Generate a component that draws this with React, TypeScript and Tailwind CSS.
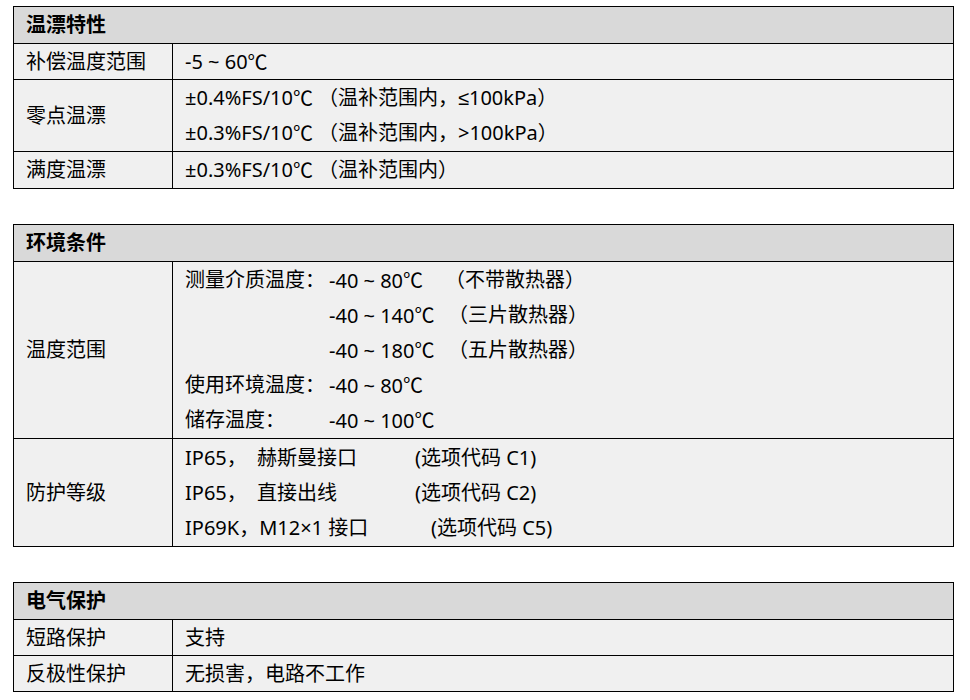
import React from "react";

const font = {
  fontFamily: '"Noto Sans", "Noto Sans CJK SC", sans-serif',
};

const cjk = { fontFamily: '"Noto Sans CJK SC", sans-serif' };
const sym = { fontFamily: '"Liberation Sans", sans-serif' };

function C() {
  return <span style={cjk}>℃</span>;
}

function Header({ title }: { title: string }) {
  return (
    <div className="h-[37px] bg-[#d9d9d9] border-b border-black flex items-center pl-3 font-bold text-[20px] leading-none">
      {title}
    </div>
  );
}

function Row({
  label,
  h,
  last,
  children,
}: {
  label: string;
  h: string;
  last?: boolean;
  children: React.ReactNode;
}) {
  return (
    <div className={`flex ${h} ${last ? "" : "border-b border-black"}`}>
      <div className="w-[159px] shrink-0 border-r border-black flex items-center pl-3">{label}</div>
      <div className="flex-1 pl-3 flex flex-col justify-center">{children}</div>
    </div>
  );
}

function Line({ children }: { children: React.ReactNode }) {
  return <div className="h-[35px] flex items-center whitespace-pre">{children}</div>;
}

export default function App() {
  return (
    <div className="bg-white w-[970px] h-[700px] pt-[6px] pl-[13px] text-black text-[20px]" style={font}>
      <div className="w-[941px] border border-black bg-[#f0f0f0]">
        <Header title="温漂特性" />
        <Row label="补偿温度范围" h="h-[36px]">
          <Line>
            <span>-5 ~ 60</span>
            <C />
          </Line>
        </Row>
        <Row label="零点温漂" h="h-[72px]">
          <Line>
            <span>±0.4%FS/10</span>
            <C />
            <span className="ml-[5px]">（温补范围内，</span>
            <span style={sym}>≤</span>
            <span>100kPa）</span>
          </Line>
          <Line>
            <span>±0.3%FS/10</span>
            <C />
            <span className="ml-[5px]">（温补范围内，</span>
            <span>&gt;100kPa）</span>
          </Line>
        </Row>
        <Row label="满度温漂" h="h-[36px]" last>
          <Line>
            <span>±0.3%FS/10</span>
            <C />
            <span className="ml-[5px]">（温补范围内）</span>
          </Line>
        </Row>
      </div>

      <div className="w-[941px] border border-black bg-[#f0f0f0] mt-[35px]">
        <Header title="环境条件" />
        <Row label="温度范围" h="h-[177px]">
          <Line>
            <span className="w-[144px]">测量介质温度：</span>
            <span className="w-[116px]">
              -40 ~ 80<C />
            </span>
            <span>（不带散热器）</span>
          </Line>
          <Line>
            <span className="w-[144px]"></span>
            <span className="w-[119px]">
              -40 ~ 140<C />
            </span>
            <span>（三片散热器）</span>
          </Line>
          <Line>
            <span className="w-[144px]"></span>
            <span className="w-[119px]">
              -40 ~ 180<C />
            </span>
            <span>（五片散热器）</span>
          </Line>
          <Line>
            <span className="w-[144px]">使用环境温度：</span>
            <span>
              -40 ~ 80<C />
            </span>
          </Line>
          <Line>
            <span className="w-[144px]">储存温度：</span>
            <span>
              -40 ~ 100<C />
            </span>
          </Line>
        </Row>
        <Row label="防护等级" h="h-[107px]" last>
          <Line>
            <span className="w-[72px]">IP65，</span>
            <span className="w-[158px]">赫斯曼接口</span>
            <span>(选项代码 C1)</span>
          </Line>
          <Line>
            <span className="w-[72px]">IP65，</span>
            <span className="w-[158px]">直接出线</span>
            <span>(选项代码 C2)</span>
          </Line>
          <Line>
            <span className="w-[246px]">IP69K，M12×1 接口</span>
            <span>(选项代码 C5)</span>
          </Line>
        </Row>
      </div>

      <div className="w-[941px] border border-black bg-[#f0f0f0] mt-[35px]">
        <Header title="电气保护" />
        <Row label="短路保护" h="h-[36px]">
          <Line>支持</Line>
        </Row>
        <Row label="反极性保护" h="h-[35px]" last>
          <Line>无损害，电路不工作</Line>
        </Row>
      </div>
    </div>
  );
}
